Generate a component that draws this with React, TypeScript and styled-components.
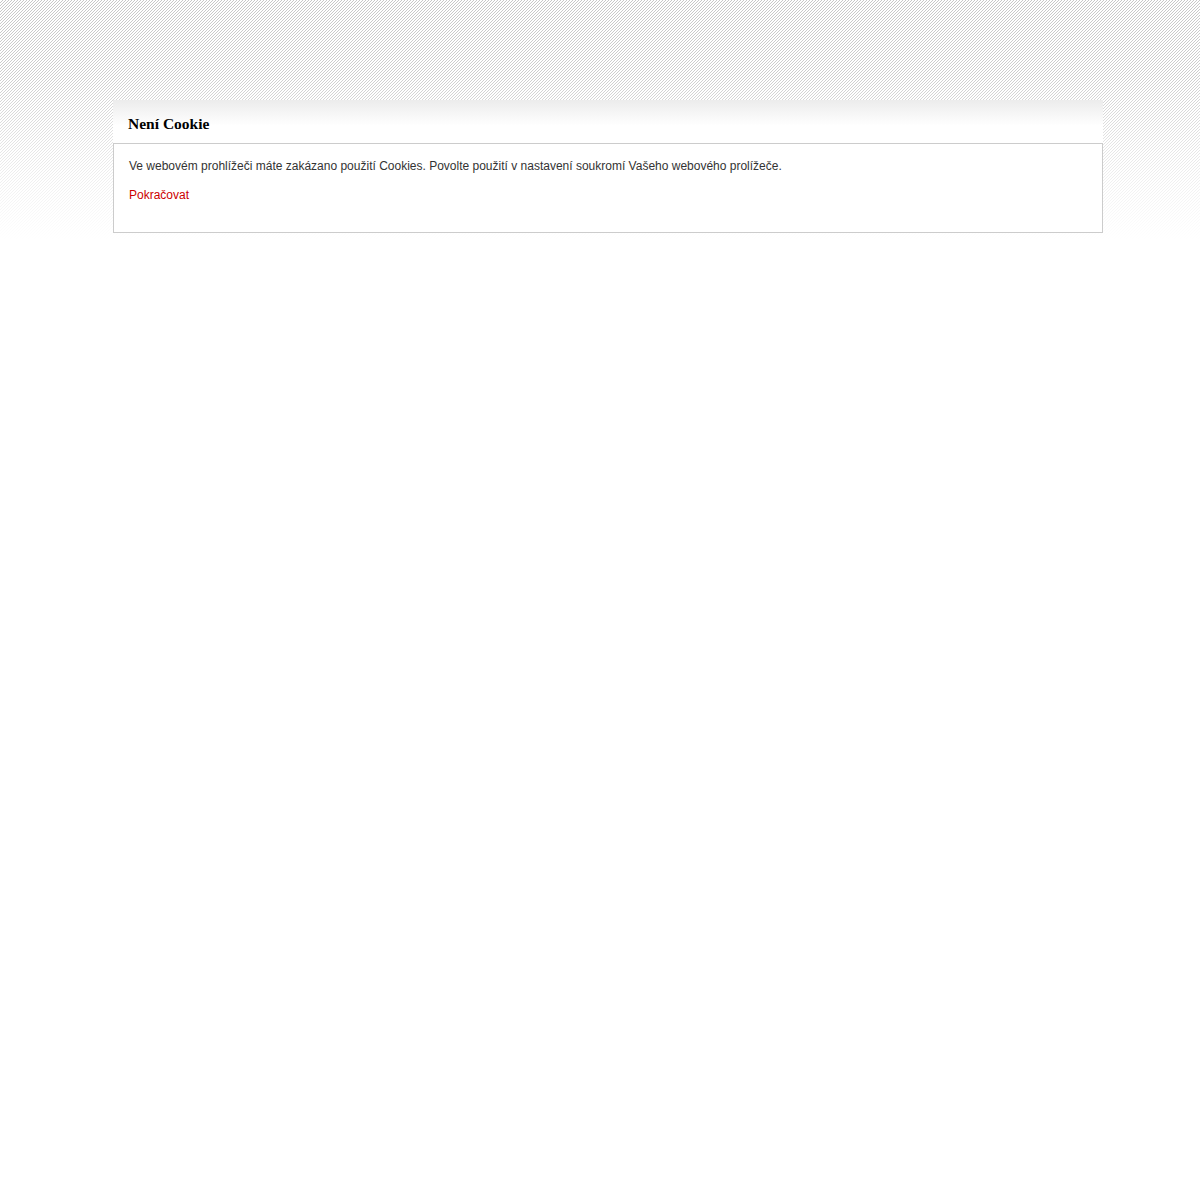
import React from "react";
import styled, { createGlobalStyle } from "styled-components";

const GlobalStyle = createGlobalStyle`
  html, body {
    margin: 0;
    padding: 0;
    background: #fff;
  }
  body {
    font-family: "Liberation Sans", Arial, sans-serif;
    font-size: 12px;
    color: #333;
  }
`;

// striped band at the top of the page, fading out into white
const Page = styled.div`
  position: relative;
  box-sizing: border-box;
  min-height: 1200px;
  padding-top: 100px;
  &::before {
    content: "";
    position: absolute;
    top: 0;
    left: 0;
    right: 0;
    height: 250px;
    background:
      linear-gradient(to bottom, rgba(255, 255, 255, 0) 0, rgba(255, 255, 255, 0.1) 30%, rgba(255, 255, 255, 0.7) 70%, #fff 96%),
      linear-gradient(135deg, #fff 0 38%, #c8c8c8 38% 62%, #fff 62% 100%) 0 0 / 3px 3px;
    z-index: 0;
  }
`;

const Box = styled.div`
  position: relative;
  z-index: 1;
  width: 990px;
  margin-left: 113px;
`;

const Head = styled.div`
  height: 43px;
  padding: 0 15px;
  display: flex;
  align-items: center;
  background: linear-gradient(to bottom, #ececec 0, #fff 60%, #fff 100%);
  h1 {
    margin: 0;
    font-family: "Liberation Serif", "Times New Roman", serif;
    font-size: 15.5px;
    font-weight: bold;
    color: #000;
    padding-top: 5px;
  }
`;

const Body = styled.div`
  border: 1px solid #ccc;
  background: #fff;
  padding: 14px 15px 29px;
  p {
    margin: 0 0 13px;
    line-height: 16px;
  }
  p:last-child {
    margin-bottom: 0;
  }
`;

const Link = styled.a`
  color: #cc0000;
  text-decoration: none;
`;

const App = () => {
  return (
    <Page>
      <GlobalStyle />
      <Box>
        <Head>
          <h1>Není Cookie</h1>
        </Head>
        <Body>
          <p>
            Ve webovém prohlížeči máte zakázano použití Cookies. Povolte použití v
            nastavení soukromí Vašeho webového prolížeče.
          </p>
          <p>
            <Link href="#">Pokračovat</Link>
          </p>
        </Body>
      </Box>
    </Page>
  );
};

export default App;
